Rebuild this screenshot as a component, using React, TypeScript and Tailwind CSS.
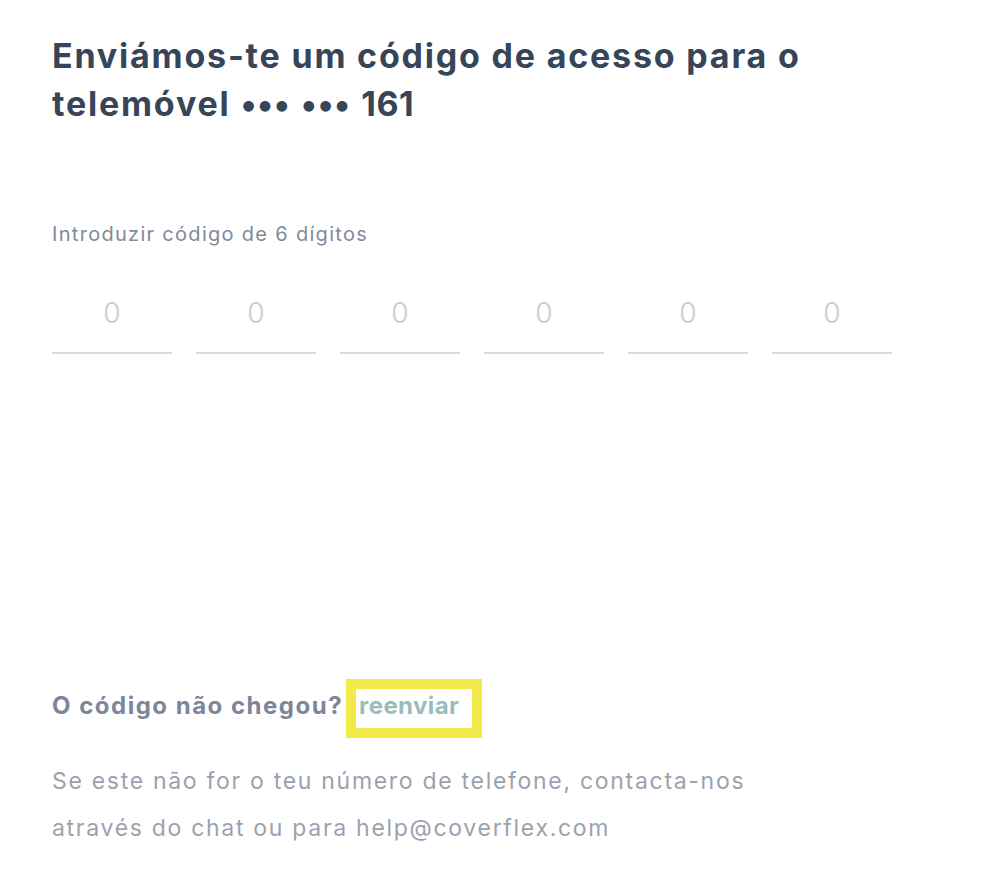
export default function App() {
  const digits = [0, 1, 2, 3, 4, 5];

  return (
    <div className="min-h-screen bg-white font-['Inter','Liberation_Sans',sans-serif]">
      <div className="px-[52px] pt-[32px]">
        {/* Heading */}
        <h1 className="max-w-[820px] text-[34px] font-bold leading-[48px] tracking-[1.8px] text-[#364558]">
          Enviámos-te um código de acesso para o telemóvel{" "}
          <span className="tracking-[0.5px] [word-spacing:2px]">••• ••• </span>
          <span className="tracking-[0.5px]">161</span>
        </h1>

        {/* Code input */}
        <p className="mt-[92px] text-[20px] leading-[28px] tracking-[1.3px] text-[#7f8a9b]">
          Introduzir código de 6 dígitos
        </p>
        <div className="mt-[48px] grid w-[840px] grid-cols-6 gap-6">
          {digits.map((d) => (
            <div key={d} className="flex h-[58px] items-start justify-center border-b-2 border-[#d9dce0]">
              <span className="text-[28px] font-light leading-[34px] text-[#c7cbd1]">0</span>
            </div>
          ))}
        </div>

        {/* Resend */}
        <div className="mt-[325px] flex items-baseline">
          <span className="text-[24px] font-bold tracking-[1.5px] text-[#7b8699]">O código não chegou?</span>
          <span className="ml-[3px] border-[10px] border-[#f2ea4b] pb-[6px] pl-[3px] pr-[13px] text-[24px] font-bold leading-[33px] tracking-[0.4px] text-[#9abdbb]">
            reenviar
          </span>
        </div>

        <p className="mt-[20px] max-w-[760px] text-[23px] leading-[47px] tracking-[1.7px] text-[#9aa2af]">
          Se este não for o teu número de telefone, contacta-nos através do chat ou para help@coverflex.com
        </p>
      </div>
    </div>
  );
}
